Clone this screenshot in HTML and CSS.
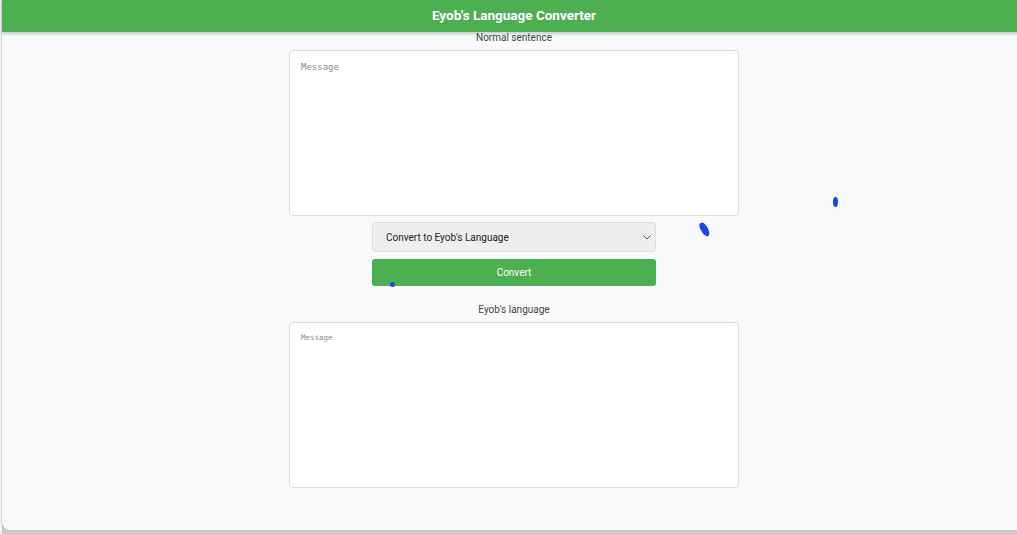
FILE: index.html
```html
<!DOCTYPE html>
<html lang="en">
<head>
<meta charset="utf-8">
<title>Eyob's Language Converter</title>
<link rel="stylesheet" href="styles.css">
</head>
<body>
<div class="app">
  <header class="topbar">Eyob's Language Converter</header>
  <main class="content">
    <label class="label first" for="src">Normal sentence</label>
    <textarea id="src" class="box" placeholder="Message"></textarea>
    <div class="select-wrap">
      <select class="mode">
        <option>Convert to Eyob's Language</option>
      </select>
      <svg class="chev" width="8" height="5" viewBox="0 0 8 5"><path d="M0.5 0.5 L4 4 L7.5 0.5" fill="none" stroke="#555" stroke-width="1"/></svg>
    </div>
    <button class="convert">Convert</button>
    <label class="label second" for="dst">Eyob's language</label>
    <textarea id="dst" class="box small" placeholder="Message"></textarea>
  </main>
  <span class="dot d1"></span>
  <span class="dot d2"></span>
  <span class="dot d3"></span>
</div>
</body>
</html>
```
FILE: styles.css
```css
html, body {
  margin: 0;
  padding: 0;
  background: #c9c9c9;
  overflow: hidden;
  height: 534px;
}
body {
  font-family: Roboto, "Liberation Sans", sans-serif;
  background: linear-gradient(#f4f4f4, #f4f4f4) left top / 2px 100% no-repeat, #c9c9c9;
}
.app {
  position: relative;
  margin-left: 2px;
  width: 1024px;
  height: 530px;
  background: #f8f9fa;
  border-radius: 0 0 0 8px;
  box-shadow: -1px 0 1px rgba(0,0,0,0.12);
}
.topbar {
  height: 32px;
  background: #4caf50;
  color: #fff;
  font-weight: 700;
  font-size: 13.5px;
  line-height: 30px;
  text-align: center;
  box-shadow: 0 2px 3px rgba(0,0,0,0.18);
  position: relative;
  z-index: 1;
}
.content {
  display: flex;
  flex-direction: column;
  align-items: center;
}
.label {
  font-size: 10px;
  line-height: 12px;
  color: #444;
}
.label.second { margin-top: 18px; }
.box {
  box-sizing: border-box;
  width: 450px;
  height: 166px;
  margin-top: 6px;
  background: #fff;
  border: 1px solid #dcdcdc;
  border-radius: 4px;
  padding: 10px 11px;
  resize: none;
  font-family: "DejaVu Sans Mono", monospace;
  font-size: 9px;
  line-height: 13px;
  outline: none;
}
.box.small {
  font-size: 7.5px;
  line-height: 10px;
}
.box::placeholder { color: #8a8a8a; }
.select-wrap {
  position: relative;
  margin-top: 6px;
  width: 284px;
  height: 30px;
}
.mode {
  appearance: none;
  -webkit-appearance: none;
  box-sizing: border-box;
  width: 100%;
  height: 100%;
  background: #eee;
  border: 1px solid #ddd;
  border-radius: 4px;
  padding: 0 13px;
  font-family: Roboto, "Liberation Sans", sans-serif;
  font-size: 10px;
  color: #222;
}
.chev {
  position: absolute;
  right: 5px;
  top: 13px;
}
.convert {
  margin-top: 7px;
  width: 284px;
  height: 27px;
  border: none;
  border-radius: 3px;
  background: #4caf50;
  color: #fff;
  font-family: Roboto, "Liberation Sans", sans-serif;
  font-size: 10px;
}
.dot {
  position: absolute;
  background: #1846e8;
  border-radius: 50%;
}
.d1 { left: 831px; top: 197px; width: 5px; height: 10px; }
.d2 { left: 699px; top: 222px; width: 7px; height: 15px; transform: rotate(-30deg); border-radius: 45% 45% 55% 55%; }
.d3 { left: 388px; top: 282px; width: 5px; height: 5px; }
```
